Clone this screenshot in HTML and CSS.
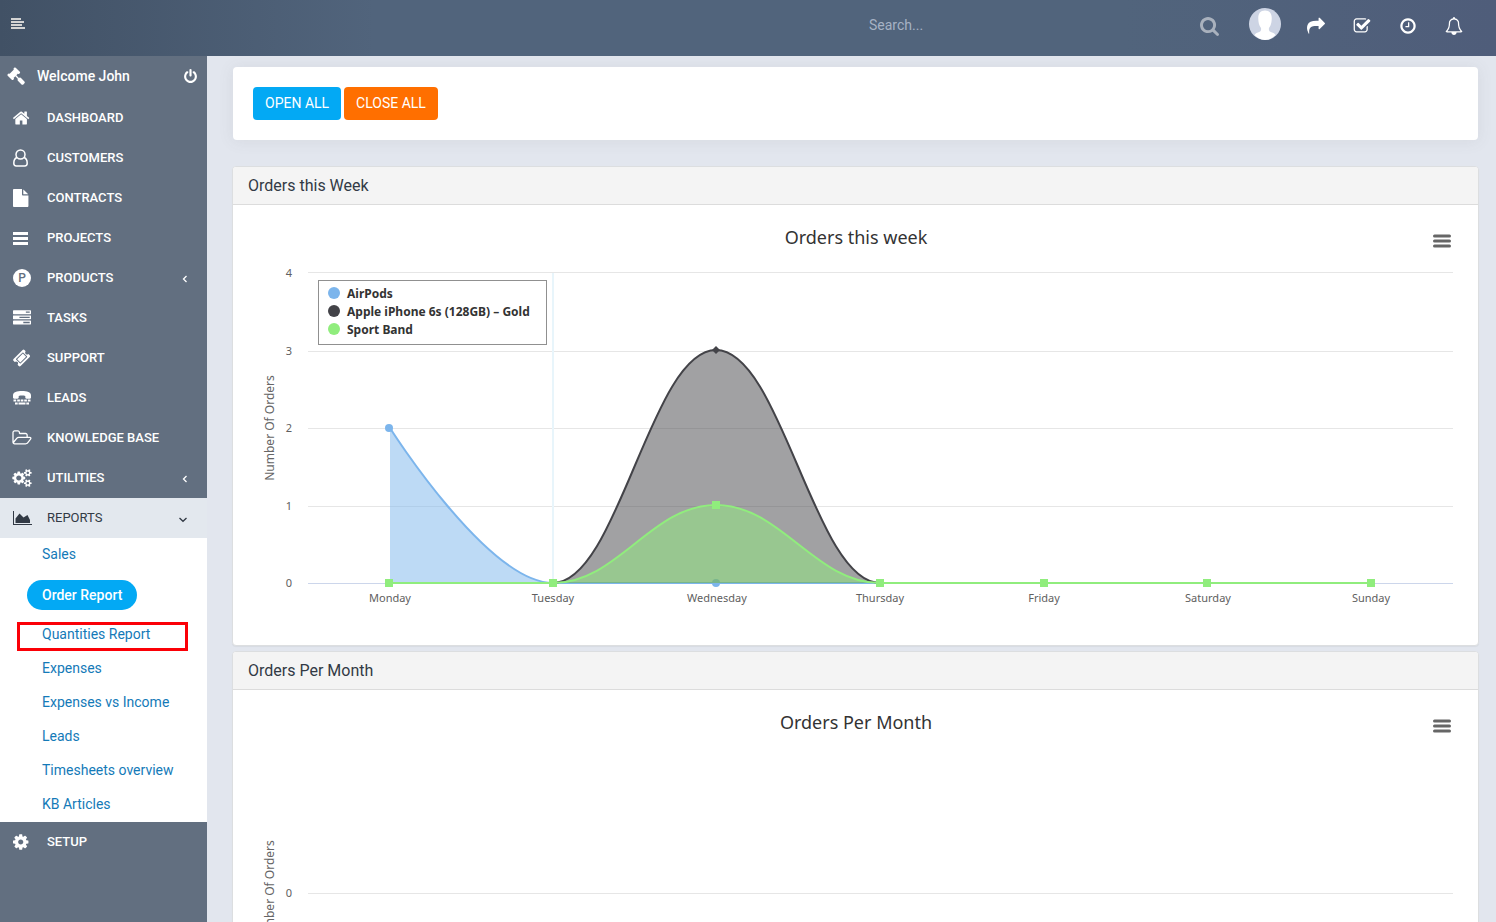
FILE: index.html
```html
<!DOCTYPE html>
<html lang="en">
<head>
<meta charset="utf-8">
<title>Order Report</title>
<link rel="stylesheet" href="styles.css">
</head>
<body>
<header class="topbar">
  <button class="icon-btn menu-toggle" aria-label="Toggle menu"><svg viewBox="0 0 14 12"><path d="M0 0h10v2H0zM0 3h13v2H0zM0 6h11v2H0zM0 9h14v2H0z"/></svg></button>
  <form class="search">
    <input class="search-input" type="search" placeholder="Search..." aria-label="Search">
    <button class="icon-btn search-btn" type="button" aria-label="Search"><svg viewBox="64 128 1664 1664"><path d="M1216 832q0-185-131.500-316.500t-316.500-131.500-316.500 131.500-131.500 316.500 131.500 316.500 316.500 131.500 316.500-131.500 131.500-316.500zm512 832q0 52-38 90t-90 38q-54 0-90-38l-343-342q-179 124-399 124-143 0-273.500-55.500t-225-150-150-225-55.500-273.500 55.500-273.500 150-225 225-150 273.500-55.500 273.500 55.500 225 150 150 225 55.500 273.500q0 220-124 399l343 343q37 37 37 90z"/></svg></button>
  </form>
  <nav class="actions" aria-label="Quick actions">
    <button class="icon-btn avatar" aria-label="Profile"><svg viewBox="0 0 32 32"><circle cx="16" cy="16" r="16" fill="#cdd4e4"/><path d="M16 2.500c-5 0-7 3.500-6.700 8.500 0 3 .7 6.500 2.700 9 .5 2.500-.5 3.500-2.500 4.200-2 .6-3 1-4 2.800A15.500 15.500 0 0 0 16 32a15.500 15.500 0 0 0 10.500-5c-1-1.800-2-2.200-4-2.800-2-.7-3-1.700-2.500-4.200 2-2.500 2.700-6 2.700-9 .3-5-1.700-8.500-6.700-8.500z"/></svg></button>
    <button class="icon-btn action" aria-label="Share"><svg viewBox="0 0 1792 1792"><path d="M1792 640q0 26-19 45l-512 512q-19 19-45 19t-45-19-19-45v-256h-224q-98 0-175.500 6t-154 21.500-133 42.500-105.500 69.500-80 101-48.500 138.500-17.500 181q0 55 5 123 0 6 2.500 23.500t2.500 26.500q0 15-8.500 25t-23.500 10q-16 0-28-17-7-9-13-22t-13.500-30-10.500-24q-127-285-127-451 0-199 53-333 162-403 875-403h224v-256q0-26 19-45t45-19 45 19l512 512q19 19 19 45z"/></svg></button>
    <button class="icon-btn action" aria-label="To do"><svg viewBox="0 0 1792 1792"><path d="M1472 930v318q0 119-84.500 203.500t-203.500 84.500h-832q-119 0-203.500-84.500t-84.500-203.500v-832q0-119 84.500-203.500t203.500-84.500h832q63 0 117 25 15 7 18 23 3 17-9 29l-49 49q-10 10-23 10-3 0-9-2-23-6-45-6h-832q-66 0-113 47t-47 113v832q0 66 47 113t113 47h832q66 0 113-47t47-113v-254q0-13 9-22l64-64q10-10 23-10 6 0 12 3 20 8 20 29zm231-489l-814 814q-24 24-57 24t-57-24l-430-430q-24-24-24-57t24-57l110-110q24-24 57-24t57 24l263 263 647-647q24-24 57-24t57 24l110 110q24 24 24 57t-24 57z"/></svg></button>
    <button class="icon-btn action" aria-label="Timers"><svg viewBox="0 0 1792 1792"><path d="M1024 544v448q0 14-9 23t-23 9h-320q-14 0-23-9t-9-23v-64q0-14 9-23t23-9h224v-352q0-14 9-23t23-9h64q14 0 23 9t9 23zm416 352q0-148-73-273t-198-198-273-73-273 73-198 198-73 273 73 273 198 198 273 73 273-73 198-198 73-273zm224 0q0 209-103 385.500t-279.500 279.500-385.500 103-385.500-103-279.500-279.500-103-385.500 103-385.500 279.500-279.500 385.500-103 385.500 103 279.500 279.500 103 385.500z"/></svg></button>
    <button class="icon-btn action" aria-label="Notifications"><svg viewBox="0 0 1792 1792"><path d="M246 1408h1300q-266-300-266-832 0-51-24-105t-69-103-121.500-80.500-169.500-31.500-169.500 31.500-121.500 80.500-69 103-24 105q0 532-266 832zm1482 0q0 52-38 90t-90 38h-448q0 106-75 181t-181 75-181-75-75-181h-448q-52 0-90-38t-38-90q50-42 91-88t85-119.500 74.500-158.500 50-206 19.500-260q0-152 117-282.500t307-158.500q-8-19-8-39 0-40 28-68t68-28 68 28 28 68q0 20-8 39 190 28 307 158.500t117 282.500q0 139 19.500 260t50 206 74.500 158.500 85 119.500 91 88z"/></svg></button>
  </nav>
</header>
<div class="shell">
  <aside class="sidebar">
    <div class="welcome">
      <svg class="gavel" viewBox="0 0 1792 1792"><path d="M1771 1536q0 53-37 90l-107 108q-39 37-91 37-53 0-90-37l-363-364q-38-36-38-90 0-53 43-96l-256-256-126 126q-14 14-34 14t-34-14q2 2 12.500 12t12.500 13 10 11.500 10 13.500 6 13.500 5.500 16.500 1.500 18q0 38-28 68-3 3-16.500 18t-19 20.500-18.500 16.500-22 15.500-22 9-26 4.500q-40 0-68-28l-408-408q-28-28-28-68 0-13 4.500-26t9-22 15.500-22 16.500-18.500 20.500-19 18-16.500q30-28 68-28 10 0 18 1.500t16.500 5.500 13.500 6 13.500 10 11.500 10 13 12.500 12 12.500q-14-14-14-34t14-34l348-348q14-14 34-14t34 14q-2-2-12.500-12t-12.500-13-10-11.500-10-13.500-6-13.500-5.500-16.500-1.500-18q0-38 28-68 3-3 16.500-18t19-20.500 18.500-16.500 22-15.500 22-9 26-4.500q40 0 68 28l408 408q28 28 28 68 0 13-4.500 26t-9 22-15.500 22-16.500 18.500-20.500 19-18 16.500q-30 28-68 28-10 0-18-1.500t-16.500-5.500-13.500-6-13.500-10-11.500-10-13-12.500-12-12.500q14 14 14 34t-14 34l-126 126 256 256q43-43 96-43 52 0 91 37l363 363q37 39 37 91z"/></svg>
      <span class="welcome-name">Welcome John</span>
      <button class="icon-btn power" aria-label="Log out"><svg viewBox="128 0 1536 1792"><path d="M1664 896q0 156-61 298t-164 245-245 164-298 61-298-61-245-164-164-245-61-298q0-182 80.500-343t226.500-270q43-32 95.500-25t83.500 50q32 42 24.500 94.500t-49.500 84.500q-98 74-151.500 181t-53.500 228q0 104 40.500 198.500t109.500 163.500 163.500 109.500 198.500 40.500 198.500-40.500 163.500-109.500 109.500-163.500 40.500-198.500q0-121-53.500-228t-151.500-181q-42-32-49.500-84.500t24.500-94.500q31-43 84-50t95 25q146 109 226.500 270t80.500 343zm-640-768v640q0 52-38 90t-90 38-90-38-38-90v-640q0-52 38-90t90-38 90 38 38 90z"/></svg></button>
    </div>
    <nav aria-label="Main">
      <ul class="menu">
        <li><a class="item" href="#"><svg class="ico" preserveAspectRatio="xMinYMid" viewBox="88 0 1664 1792"><path d="M1472 992v480q0 26-19 45t-45 19h-384v-384h-256v384h-384q-26 0-45-19t-19-45v-480q0-1 .5-3t.5-3l575-474 575 474q1 2 1 6zm223-69l-62 74q-8 9-21 11h-3q-13 0-21-7l-692-577-692 577q-12 8-24 7-13-2-21-11l-62-74q-8-10-7-23.500t11-21.500l719-599q32-26 76-26t76 26l244 204v-195q0-14 9-23t23-9h192q14 0 23 9t9 23v408l219 182q10 8 11 21.500t-7 23.500z"/></svg>DASHBOARD</a></li>
        <li><a class="item" href="#"><svg class="ico line" preserveAspectRatio="xMinYMid" viewBox="0 0 18 18"><circle cx="7.500" cy="5.500" r="4.500"/><path d="M4 8.500C1.500 9.300.8 11.800.8 14.300.8 16.300 2 17 3.300 17h8.400c1.300 0 2.500-.7 2.500-2.700 0-2.500-.7-5-3.200-5.800"/></svg>CUSTOMERS</a></li>
        <li><a class="item" href="#"><svg class="ico" preserveAspectRatio="xMinYMid" viewBox="128 0 1536 1792"><path d="M1152 512v-472q22 14 36 28l408 408q14 14 28 36h-472zm-128 32q0 40 28 68t68 28h544v1056q0 40-28 68t-68 28h-1344q-40 0-68-28t-28-68v-1600q0-40 28-68t68-28h800v544z"/></svg>CONTRACTS</a></li>
        <li><a class="item" href="#"><svg class="ico" preserveAspectRatio="xMinYMid" viewBox="0 0 18 18"><path d="M0 3h15v3H0zM0 8h15v3H0zM0 13h15v3H0z"/></svg>PROJECTS</a></li>
        <li><a class="item" href="#"><svg class="ico" preserveAspectRatio="xMinYMid" viewBox="0 0 18 18"><circle cx="9" cy="9" r="9"/><text class="badge-letter" x="9" y="13" text-anchor="middle">P</text></svg>PRODUCTS<svg class="arrow" viewBox="0 0 8 8"><path d="M5.500 1L2.500 4l3 3"/></svg></a></li>
        <li><a class="item" href="#"><svg class="ico" preserveAspectRatio="xMinYMid" viewBox="0 0 1792 1792"><path d="M1024 1408h640v-128h-640v128zm-384-512h1024v-128h-1024v128zm640-512h384v-128h-384v128zm512 832v256q0 26-19 45t-45 19h-1664q-26 0-45-19t-19-45v-256q0-26 19-45t45-19h1664q26 0 45 19t19 45zm0-512v256q0 26-19 45t-45 19h-1664q-26 0-45-19t-19-45v-256q0-26 19-45t45-19h1664q26 0 45 19t19 45zm0-512v256q0 26-19 45t-45 19h-1664q-26 0-45-19t-19-45v-256q0-26 19-45t45-19h1664q26 0 45 19t19 45z"/></svg>TASKS</a></li>
        <li><a class="item" href="#"><svg class="ico" preserveAspectRatio="xMinYMid" viewBox="40 0 1792 1792"><path d="M1024 452l316 316-572 572-316-316zm-211 979l618-618q19-19 19-45t-19-45l-362-362q-18-18-45-18t-45 18l-618 618q-19 19-19 45t19 45l362 362q18 18 45 18t45-18zm889-637l-907 908q-37 37-90.500 37t-90.500-37l-126-126q56-56 56-136t-56-136-136-56-136 56l-125-126q-37-37-37-90.500t37-90.500l907-906q37-37 90.500-37t90.500 37l125 125q-56 56-56 136t56 136 136 56 136-56l126 125q37 37 37 90.500t-37 90.500z"/></svg>SUPPORT</a></li>
        <li><a class="item" href="#"><svg class="ico" preserveAspectRatio="xMinYMid" viewBox="0 0 18 18"><path d="M0 8.500V6.500C0 3 4 2 9 2s9 1 9 4.500v2c0 .8-.5 1.200-1.200 1.200h-3.300c-.8 0-1.200-.5-1.200-1.200V7c-2-.6-4.600-.6-6.600 0v1.500c0 .7-.5 1.200-1.200 1.200H1.200C.5 9.700 0 9.300 0 8.500zM.5 10.500h2.700v2H.5zM4.200 10.500h2.700v2H4.200zM7.700 10.500h2.700v2H7.700zM11.200 10.500h2.700v2h-2.700zM14.800 10.500h2.700v2h-2.700zM2 13.500h2.700v2H2zM5.500 13.500h7v2h-7zM13.300 13.500H16v2h-2.700z"/></svg>LEADS</a></li>
        <li><a class="item" href="#"><svg class="ico" preserveAspectRatio="xMinYMid" viewBox="0 0 1850 1792"><path d="M1717 931q0-35-53-35h-1088q-40 0-85.500 21.500t-71.500 52.500l-294 363q-18 24-18 40 0 35 53 35h1088q40 0 86-22t71-53l294-363q18-22 18-39zm-1141-163h768v-160q0-40-28-68t-68-28h-576q-40 0-68-28t-28-68v-64q0-40-28-68t-68-28h-320q-40 0-68 28t-28 68v853l256-315q44-53 116-87.500t140-34.500zm1269 163q0 62-46 120l-295 363q-43 53-116 87.500t-140 34.500h-1088q-92 0-158-66t-66-158v-960q0-92 66-158t158-66h320q92 0 158 66t66 158v32h544q92 0 158 66t66 158v160h192q54 0 99 24.500t67 70.500q15 32 15 68z"/></svg>KNOWLEDGE BASE</a></li>
        <li><a class="item" href="#"><svg class="ico" preserveAspectRatio="xMinYMid" viewBox="0 0 1850 1792"><path d="M832 896q0-106-75-181t-181-75-181 75-75 181 75 181 181 75 181-75 75-181zm768 512q0-52-38-90t-90-38-90 38-38 90q0 53 37.500 90.500t90.500 37.500 90.500-37.500 37.500-90.500zm0-1024q0-52-38-90t-90-38-90 38-38 90q0 53 37.500 90.500t90.500 37.500 90.500-37.500 37.500-90.500zm-384 421v185q0 10-7 19.500t-16 10.500l-155 24q-11 35-32 76 34 48 90 115 7 11 7 20 0 12-7 19-23 30-82.500 89.500t-78.500 59.500q-11 0-21-7l-115-90q-37 19-77 31-11 108-23 155-7 24-30 24h-186q-11 0-20-7.500t-10-17.500l-23-153q-34-10-75-31l-118 89q-7 7-20 7-11 0-21-8-144-133-144-160 0-9 7-19 10-14 41-53t47-61q-23-44-35-82l-152-24q-10-1-17-9.500t-7-19.500v-185q0-10 7-19.500t16-10.500l155-24q11-35 32-76-34-48-90-115-7-11-7-20 0-12 7-20 22-30 82-89t79-59q11 0 21 7l115 90q34-18 77-32 11-108 23-154 7-24 30-24h186q11 0 20 7.500t10 17.500l23 153q34 10 75 31l118-89q8-7 20-7 11 0 21 8 144 133 144 160 0 8-7 19-12 16-42 54t-45 60q23 48 34 82l152 23q10 2 17 10.500t7 19.500zm640 533v140q0 16-149 31-12 27-30 52 51 113 51 138 0 4-4 7-122 71-124 71-8 0-46-47t-52-68q-20 2-30 2t-30-2q-14 21-52 68t-46 47q-2 0-124-71-4-3-4-7 0-25 51-138-18-25-30-52-149-15-149-31v-140q0-16 149-31 13-29 30-52-51-113-51-138 0-4 4-7 4-2 35-20t59-34 30-16q8 0 46 46.500t52 67.500q20-2 30-2t30 2q51-71 92-112l6-2q4 0 124 70 4 3 4 7 0 25-51 138 17 23 30 52 149 15 149 31zm0-1024v140q0 16-149 31-12 27-30 52 51 113 51 138 0 4-4 7-122 71-124 71-8 0-46-47t-52-68q-20 2-30 2t-30-2q-14 21-52 68t-46 47q-2 0-124-71-4-3-4-7 0-25 51-138-18-25-30-52-149-15-149-31v-140q0-16 149-31 13-29 30-52-51-113-51-138 0-4 4-7 4-2 35-20t59-34 30-16q8 0 46 46.500t52 67.500q20-2 30-2t30 2q51-71 92-112l6-2q4 0 124 70 4 3 4 7 0 25-51 138 17 23 30 52 149 15 149 31z"/></svg>UTILITIES<svg class="arrow" viewBox="0 0 8 8"><path d="M5.500 1L2.500 4l3 3"/></svg></a></li>
        <li>
          <a class="item open" href="#"><svg class="ico" preserveAspectRatio="xMinYMid" viewBox="0 0 19 18"><path d="M0 2h1v13h18v1H0zM2.500 14V9.500L6.500 4.500l4 4L14.500 6l2.500 5v3z"/></svg>REPORTS<svg class="arrow" viewBox="0 0 8 8"><path d="M.5 3L4 6.300 7.500 3"/></svg></a>
          <ul class="submenu">
            <li><a class="sub" href="#">Sales</a></li>
            <li><a class="sub current" href="#" aria-current="page">Order Report</a></li>
            <li class="marked"><a class="sub" href="#">Quantities Report</a></li>
            <li><a class="sub" href="#">Expenses</a></li>
            <li><a class="sub" href="#">Expenses vs Income</a></li>
            <li><a class="sub" href="#">Leads</a></li>
            <li><a class="sub" href="#">Timesheets overview</a></li>
            <li><a class="sub" href="#">KB Articles</a></li>
          </ul>
        </li>
        <li><a class="item" href="#"><svg class="ico" preserveAspectRatio="xMinYMid" viewBox="128 0 1536 1792"><path d="M1152 896q0-106-75-181t-181-75-181 75-75 181 75 181 181 75 181-75 75-181zm512-109v222q0 12-8 23t-20 13l-185 28q-19 54-39 91 35 50 107 138 10 12 10 25t-9 23q-27 37-99 108t-94 71q-12 0-26-9l-138-108q-44 23-91 38-16 136-29 186-7 28-36 28h-222q-14 0-24.500-8.500t-11.500-21.500l-28-184q-49-16-90-37l-141 107q-10 9-25 9-14 0-25-11-126-114-165-168-7-10-7-23 0-12 8-23 15-21 51-66.500t54-70.500q-27-50-41-99l-183-27q-13-2-21-12.500t-8-23.500v-222q0-12 8-23t19-13l186-28q14-46 39-92-40-57-107-138-10-12-10-24 0-10 9-23 26-36 98.500-107.500t94.500-71.500q13 0 26 10l138 107q44-23 91-38 16-136 29-186 7-28 36-28h222q14 0 24.500 8.500t11.500 21.500l28 184q49 16 90 37l142-107q9-9 24-9 13 0 25 10 129 119 165 170 7 8 7 22 0 12-8 23-15 21-51 66.500t-54 70.500q26 50 41 98l183 28q13 2 21 12.500t8 23.500z"/></svg>SETUP</a></li>
      </ul>
    </nav>
  </aside>
  <main class="content">
    <section class="toolbar">
      <button class="btn btn-info">OPEN ALL</button>
      <button class="btn btn-warn">CLOSE ALL</button>
    </section>
    <section class="panel">
      <h2 class="panel-head">Orders this Week</h2>
      <div class="panel-body">
        <button class="icon-btn chart-menu" aria-label="Chart menu"><svg viewBox="0 0 18 14"><path d="M1.500 2h15M1.500 7h15M1.500 12h15"/></svg></button>
        <svg class="chart" viewBox="0 0 1213 400" role="img" aria-label="Orders this week">
          <text class="c-title" x="607" y="24">Orders this week</text>
          <path class="grid" d="M59 52.500h1145M59 131.500h1145M59 208.500h1145M59 286.500h1145"/>
          <path class="axis" d="M59 363.500h1145"/>
          <path class="band" d="M304 53v310"/>
          <text class="c-axis" transform="translate(25 208) rotate(-90)">Number Of Orders</text>
          <g class="y-labels"><text x="43" y="57">4</text><text x="43" y="135">3</text><text x="43" y="212">2</text><text x="43" y="290">1</text><text x="43" y="367">0</text></g>
          <g class="x-labels"><text x="141" y="382">Monday</text><text x="304" y="382">Tuesday</text><text x="468" y="382">Wednesday</text><text x="631" y="382">Thursday</text><text x="795" y="382">Friday</text><text x="959" y="382">Saturday</text><text x="1122" y="382">Sunday</text></g>
          <g class="s-blue"><path class="area" d="M141 208C141 208 239 363 304 363H1122H141z"/><path class="line" d="M141 208C141 208 239 363 304 363H1122"/><circle cx="140" cy="208" r="4"/><circle cx="467" cy="363" r="4"/></g>
          <g class="s-dark"><path class="area" d="M304 363C369 363 402 130 467 130S566 363 631 363z"/><path class="line" d="M141 363H304C369 363 402 130 467 130S566 363 631 363H1122"/><path d="M467 126l4 4-4 4-4-4z"/></g>
          <g class="s-green"><path class="area" d="M304 363C369 363 402 285 467 285S566 363 631 363z"/><path class="line" d="M141 363H304C369 363 402 285 467 285S566 363 631 363H1122"/><path d="M136 359h8v8h-8zM300 359h8v8h-8zM463 281h8v8h-8zM627 359h8v8h-8zM791 359h8v8h-8zM954 359h8v8h-8zM1118 359h8v8h-8z"/></g>
          <rect class="legend-box" x="69.500" y="60.500" width="228" height="64"/>
          <circle class="s-blue" cx="85" cy="73" r="6"/><circle class="s-dark" cx="85" cy="91" r="6"/><circle class="s-green" cx="85" cy="109" r="6"/>
          <g class="legend"><text x="98" y="78">AirPods</text><text x="98" y="96">Apple iPhone 6s (128GB) – Gold</text><text x="98" y="114">Sport Band</text></g>
        </svg>
      </div>
    </section>
    <section class="panel">
      <h2 class="panel-head">Orders Per Month</h2>
      <div class="panel-body">
        <button class="icon-btn chart-menu" aria-label="Chart menu"><svg viewBox="0 0 18 14"><path d="M1.500 2h15M1.500 7h15M1.500 12h15"/></svg></button>
        <svg class="chart" viewBox="0 0 1213 400" role="img" aria-label="Orders per month">
          <text class="c-title" x="607" y="24">Orders Per Month</text>
          <path class="grid" d="M59 188.500h1145"/>
          <text class="c-axis" transform="translate(25 188) rotate(-90)">Number Of Orders</text>
          <g class="y-labels"><text x="43" y="192">0</text></g>
        </svg>
      </div>
    </section>
  </main>
</div>
</body>
</html>
```
FILE: styles.css
```css
*, *::after { box-sizing: border-box; }
body {
  margin: 0;
  height: 100vh;
  display: flex;
  flex-direction: column;
  overflow: hidden;
  background: #e2e6ee;
  font-family: Roboto, "Liberation Sans", sans-serif;
  font-size: 14px;
  color: #323a45;
}
ul { list-style: none; margin: 0; padding: 0; }
a { text-decoration: none; }
svg { display: block; fill: currentColor; }

.icon-btn {
  display: flex;
  align-items: center;
  justify-content: center;
  padding: 0;
  border: 0;
  background: none;
  color: #fff;
  cursor: pointer;
}

/* Top bar */
.topbar {
  flex: none;
  display: flex;
  align-items: center;
  height: 56px;
  padding: 0 19px 0 11px;
  background: linear-gradient(to right, #415165 0%, #51647c 25%, #51647c 75%, #4f5d7a 100%);
}
.menu-toggle { color: #d3d3d3; margin-bottom: 8px; }
.menu-toggle svg { width: 14px; height: 12px; }
.search { display: flex; align-items: center; margin: 0 30px 0 auto; padding-bottom: 6px; }
.search-input {
  width: 320px;
  padding: 0;
  border: 0;
  outline: 0;
  background: none;
  color: #fff;
  font: 14px/20px Roboto, sans-serif;
}
.search-input::placeholder { color: #a6b2c4; }
.search-btn { color: #a9b1bd; margin: 3px 0 0 11px; }
.search-btn svg { width: 19px; height: 19px; }
.actions { display: flex; align-items: center; }
.avatar { margin: 0 12px 8px 0; }
.avatar svg { width: 32px; height: 32px; }
.action { width: 46px; height: 30px; margin-bottom: 5px; }
.action svg { width: 18px; height: 18px; }

/* Side menu */
.shell { flex: 1; display: flex; min-height: 0; }
.sidebar { flex: none; width: 207px; background: #626f80; color: #fff; overflow: hidden; }
.welcome { display: flex; align-items: center; height: 42px; padding: 0 10px 2px 7px; }
.gavel { width: 18px; height: 18px; }
.welcome-name { margin-left: 12px; font-weight: 500; }
.power { margin-left: auto; }
.power svg { width: 13px; height: 15px; }
.item {
  display: flex;
  align-items: center;
  height: 40px;
  padding: 0 18px 2px 13px;
  color: #fff;
  font-size: 13px;
  font-weight: 500;
}
.ico { flex: none; width: 20px; height: 18px; margin: 1px 14px 0 0; overflow: visible; }
.ico.line { fill: none; stroke: currentColor; stroke-width: 1.5; }
.badge-letter { fill: #626f80; font-size: 12px; font-weight: 500; }
.arrow { width: 8px; height: 8px; margin: 3px 0 0 auto; fill: none; stroke: currentColor; stroke-width: 1.3; }
.item.open { padding-right: 20px; background: #e3e8ee; color: #323a45; font-weight: 400; }
.submenu { padding-bottom: 1px; background: #fff; }
.submenu li { display: flex; position: relative; }
.sub { margin: 0 0 0 27px; padding: 0 15px; color: #147ab8; line-height: 34px; }
.submenu li:first-child .sub { line-height: 32px; }
.sub.current { margin: 10px 0 7px 27px; border-radius: 15px; background: #03a9f4; color: #fff; font-weight: 500; line-height: 30px; }
.marked::after {
  content: "";
  position: absolute;
  inset: 5px auto auto 17px;
  width: 171px;
  height: 29px;
  border: 3px solid #fb0007;
}

/* Main column */
.content { flex: 1; min-width: 0; padding: 11px 17px 0 25px; overflow: auto; scrollbar-width: none; }
.toolbar {
  display: flex;
  gap: 3px;
  margin: 0 1px 26px;
  padding: 20px;
  border-radius: 4px;
  background: #fff;
  box-shadow: 0 1px 15px 1px rgba(90, 90, 90, 0.08);
}
.btn { height: 33px; padding: 0 12px 1px; border: 0; border-radius: 4px; color: #fff; font: 14px/20px Roboto, sans-serif; }
.btn-info { background: #03a9f4; }
.btn-warn { background: #ff6f00; }
.panel {
  margin-bottom: 5px;
  border: 1px solid #dcdee0;
  border-radius: 4px;
  background: #fff;
  box-shadow: 0 1px 1px rgba(0, 0, 0, 0.05);
}
.panel-head {
  margin: 0;
  padding: 9px 15px;
  border-bottom: 1px solid #dcdcdc;
  border-radius: 3px 3px 0 0;
  background: #f4f4f4;
  font-size: 16px;
  font-weight: 400;
  line-height: 19px;
}
.panel-body { position: relative; padding: 15px 16px 25px; }
.chart-menu { position: absolute; top: 29px; right: 27px; color: #666; }
.chart-menu svg { width: 18px; height: 14px; fill: none; stroke: currentColor; stroke-width: 3; stroke-linecap: round; }

/* Charts */
.chart { width: 100%; height: auto; font-family: "Noto Sans", "DejaVu Sans", sans-serif; }
.c-title { fill: #333; font-size: 18px; text-anchor: middle; }
.c-axis { fill: #666; font-size: 12px; text-anchor: middle; }
.y-labels { fill: #606060; font-size: 11px; text-anchor: end; }
.x-labels { fill: #606060; font-size: 11px; text-anchor: middle; }
.grid { stroke: #e6e6e6; }
.axis { stroke: #ccd6eb; }
.band { stroke: #e8f5fb; stroke-width: 2; }
.s-blue { fill: #7cb5ec; stroke: none; }
.s-dark { fill: #434348; stroke: none; }
.s-green { fill: #90ed7d; stroke: none; }
.area { fill-opacity: 0.5; }
.chart .line { fill: none; stroke-width: 2; }
.s-blue .line { stroke: #7cb5ec; }
.s-dark .line { stroke: #434348; }
.s-green .line { stroke: #90ed7d; }
.legend-box { fill: #fff; stroke: #909090; }
.legend { fill: #333; font-size: 12px; font-weight: 700; }
```
